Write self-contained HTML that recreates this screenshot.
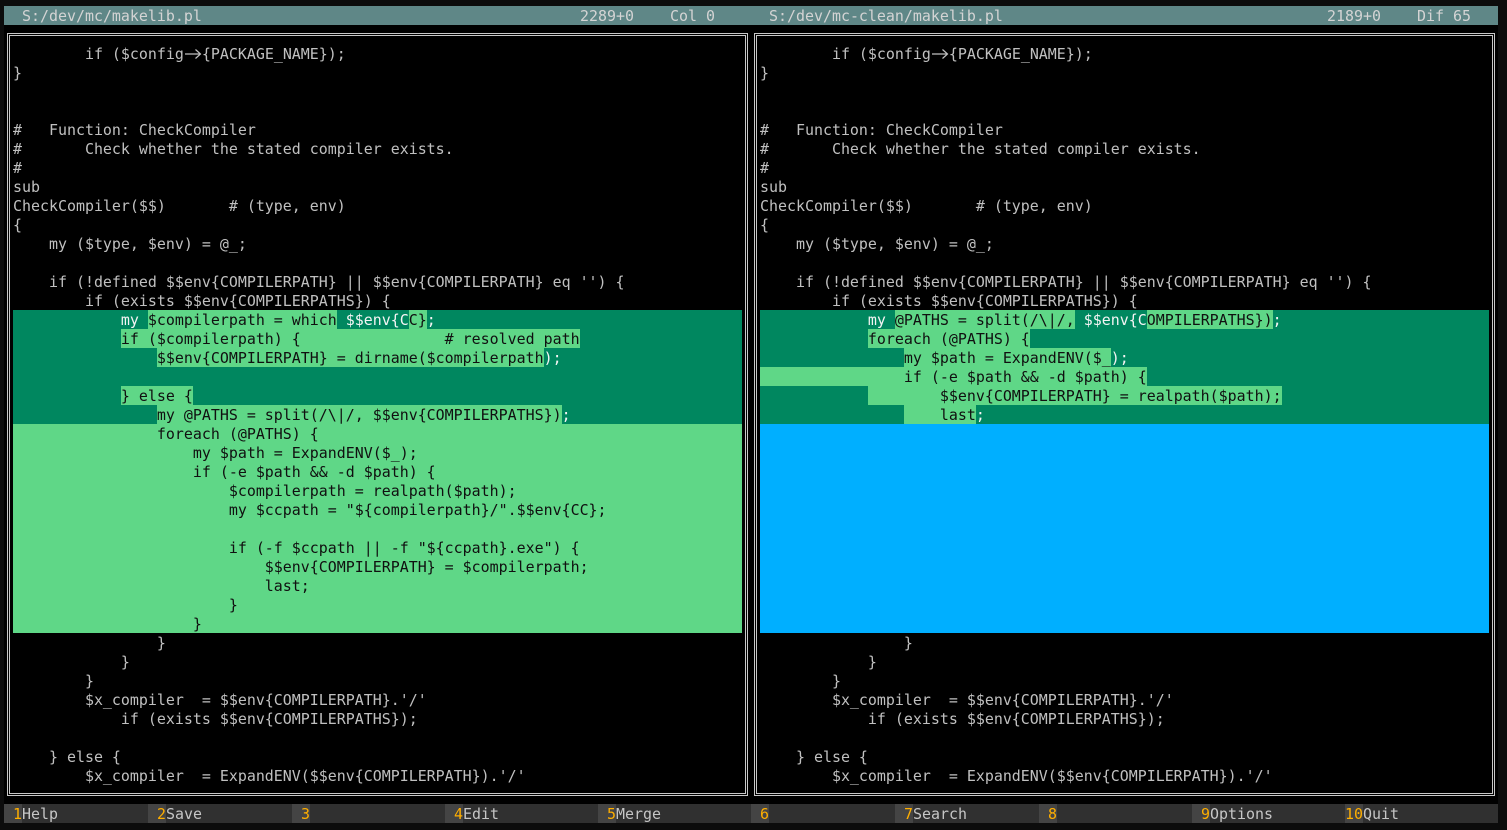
<!DOCTYPE html>
<html><head><meta charset="utf-8"><style>
html,body{margin:0;padding:0;background:#0c0c0c;width:1507px;height:830px;overflow:hidden}
body{position:relative;font:14.95px/21px "DejaVu Sans Mono","Liberation Mono",monospace;color:#c0c0c0;font-variant-ligatures:none}
.abs{position:absolute}
#term{left:4px;top:6px;width:1494px;height:817px;background:#000}
.title{left:4px;top:6px;width:1494px;height:19px;background:#5f8787;color:#d4d4d4}
.title span{position:absolute;top:0;white-space:pre}
.box{box-sizing:border-box;top:33px;height:763px;border:1px solid #c8c8c8}
.box:after{content:"";position:absolute;left:1px;top:1px;right:1px;bottom:1px;border:1px solid #c8c8c8}
pre{margin:0;font:inherit;position:absolute;white-space:pre;width:729px;height:19px}
.h{background:#00875f;color:#f4f4f4}
.f{background:#5fd787;color:#101010}
.b{background:#00afff}
i{font-style:normal;display:inline-block;height:19px;vertical-align:top;background:#5fd787;color:#101010}
.ar{display:inline-block;width:18px;height:19px;vertical-align:top;position:relative}
.ar svg{position:absolute;left:0;top:0}
.fk{position:absolute;top:804px;height:19px;background:#303030;color:#c6c6c6;white-space:pre}
.fk u{text-decoration:none;display:inline-block;height:19px;vertical-align:top;width:18px;text-align:right;background:#444;color:#ffaf00}
</style></head><body>
<div class="abs" id="term"></div>
<div class="abs title">
<span style="left:18px">S:/dev/mc/makelib.pl</span>
<span style="left:576px">2289+0</span>
<span style="left:666px">Col 0</span>
<span style="left:765px">S:/dev/mc-clean/makelib.pl</span>
<span style="left:1323px">2189+0</span>
<span style="left:1413px">Dif 65</span>
</div>
<div class="abs box" style="left:7px;width:741px"></div>
<div class="abs box" style="left:754px;width:741px"></div>

<!-- LEFT -->
<pre style="left:13px;top:44px">        if ($config<span class="ar"><svg width="18" height="19" viewBox="0 0 18 19"><path d="M1 10H16M11.500 5.500L16.500 10L11.500 14.500" fill="none" stroke="#c0c0c0" stroke-width="1.200"/></svg></span>{PACKAGE_NAME});</pre>
<pre style="left:13px;top:63px">}</pre>
<pre style="left:13px;top:120px">#   Function: CheckCompiler</pre>
<pre style="left:13px;top:139px">#       Check whether the stated compiler exists.</pre>
<pre style="left:13px;top:158px">#</pre>
<pre style="left:13px;top:177px">sub</pre>
<pre style="left:13px;top:196px">CheckCompiler($$)       # (type, env)</pre>
<pre style="left:13px;top:215px">{</pre>
<pre style="left:13px;top:234px">    my ($type, $env) = @_;</pre>
<pre style="left:13px;top:272px">    if (!defined $$env{COMPILERPATH} || $$env{COMPILERPATH} eq '') {</pre>
<pre style="left:13px;top:291px">        if (exists $$env{COMPILERPATHS}) {</pre>
<pre class="h" style="left:13px;top:310px">            my <i>$compilerpath = which</i> $$env{C<i>C}</i>;</pre>
<pre class="h" style="left:13px;top:329px">            <i>if ($compilerpath) {                # resolved path</i></pre>
<pre class="h" style="left:13px;top:348px">                <i>$$env{COMPILERPATH} = dirname($compilerpath</i>);</pre>
<pre class="h" style="left:13px;top:367px"></pre>
<pre class="h" style="left:13px;top:386px">            <i>} else {</i></pre>
<pre class="h" style="left:13px;top:405px">                <i>my @PATHS = split(/\|/, $$env{COMPILERPATHS})</i>;</pre>
<pre class="f" style="left:13px;top:424px">                foreach (@PATHS) {</pre>
<pre class="f" style="left:13px;top:443px">                    my $path = ExpandENV($_);</pre>
<pre class="f" style="left:13px;top:462px">                    if (-e $path &amp;&amp; -d $path) {</pre>
<pre class="f" style="left:13px;top:481px">                        $compilerpath = realpath($path);</pre>
<pre class="f" style="left:13px;top:500px">                        my $ccpath = "${compilerpath}/".$$env{CC};</pre>
<pre class="f" style="left:13px;top:519px"></pre>
<pre class="f" style="left:13px;top:538px">                        if (-f $ccpath || -f "${ccpath}.exe") {</pre>
<pre class="f" style="left:13px;top:557px">                            $$env{COMPILERPATH} = $compilerpath;</pre>
<pre class="f" style="left:13px;top:576px">                            last;</pre>
<pre class="f" style="left:13px;top:595px">                        }</pre>
<pre class="f" style="left:13px;top:614px">                    }</pre>
<pre style="left:13px;top:633px">                }</pre>
<pre style="left:13px;top:652px">            }</pre>
<pre style="left:13px;top:671px">        }</pre>
<pre style="left:13px;top:690px">        $x_compiler  = $$env{COMPILERPATH}.'/'</pre>
<pre style="left:13px;top:709px">            if (exists $$env{COMPILERPATHS});</pre>
<pre style="left:13px;top:747px">    } else {</pre>
<pre style="left:13px;top:766px">        $x_compiler  = ExpandENV($$env{COMPILERPATH}).'/'</pre>

<!-- RIGHT -->
<pre style="left:760px;top:44px">        if ($config<span class="ar"><svg width="18" height="19" viewBox="0 0 18 19"><path d="M1 10H16M11.500 5.500L16.500 10L11.500 14.500" fill="none" stroke="#c0c0c0" stroke-width="1.200"/></svg></span>{PACKAGE_NAME});</pre>
<pre style="left:760px;top:63px">}</pre>
<pre style="left:760px;top:120px">#   Function: CheckCompiler</pre>
<pre style="left:760px;top:139px">#       Check whether the stated compiler exists.</pre>
<pre style="left:760px;top:158px">#</pre>
<pre style="left:760px;top:177px">sub</pre>
<pre style="left:760px;top:196px">CheckCompiler($$)       # (type, env)</pre>
<pre style="left:760px;top:215px">{</pre>
<pre style="left:760px;top:234px">    my ($type, $env) = @_;</pre>
<pre style="left:760px;top:272px">    if (!defined $$env{COMPILERPATH} || $$env{COMPILERPATH} eq '') {</pre>
<pre style="left:760px;top:291px">        if (exists $$env{COMPILERPATHS}) {</pre>
<pre class="h" style="left:760px;top:310px">            my <i>@PATHS = split(/\|/,</i> $$env{C<i>OMPILERPATHS})</i>;</pre>
<pre class="h" style="left:760px;top:329px">            <i>foreach (@PATHS) {</i></pre>
<pre class="h" style="left:760px;top:348px">                <i>my $path = ExpandENV($_</i>);</pre>
<pre class="h" style="left:760px;top:367px"><i>                if (-e $path &amp;&amp; -d $path) {</i></pre>
<pre class="h" style="left:760px;top:386px">            <i>        $$env{COMPILERPATH} = realpath($path);</i></pre>
<pre class="h" style="left:760px;top:405px">                <i>    last</i>;</pre>
<div class="abs b" style="left:760px;top:424px;width:729px;height:209px"></div>
<pre style="left:760px;top:633px">                }</pre>
<pre style="left:760px;top:652px">            }</pre>
<pre style="left:760px;top:671px">        }</pre>
<pre style="left:760px;top:690px">        $x_compiler  = $$env{COMPILERPATH}.'/'</pre>
<pre style="left:760px;top:709px">            if (exists $$env{COMPILERPATHS});</pre>
<pre style="left:760px;top:747px">    } else {</pre>
<pre style="left:760px;top:766px">        $x_compiler  = ExpandENV($$env{COMPILERPATH}).'/'</pre>

<!-- FUNCTION KEYS -->
<div class="fk" style="left:4px;width:144px"><u>1</u>Help</div>
<div class="fk" style="left:148px;width:144px"><u>2</u>Save</div>
<div class="fk" style="left:292px;width:153px"><u>3</u></div>
<div class="fk" style="left:445px;width:153px"><u>4</u>Edit</div>
<div class="fk" style="left:598px;width:153px"><u>5</u>Merge</div>
<div class="fk" style="left:751px;width:144px"><u>6</u></div>
<div class="fk" style="left:895px;width:144px"><u>7</u>Search</div>
<div class="fk" style="left:1039px;width:153px"><u>8</u></div>
<div class="fk" style="left:1192px;width:153px"><u>9</u>Options</div>
<div class="fk" style="left:1345px;width:153px"><u>10</u>Quit</div>
</body></html>
